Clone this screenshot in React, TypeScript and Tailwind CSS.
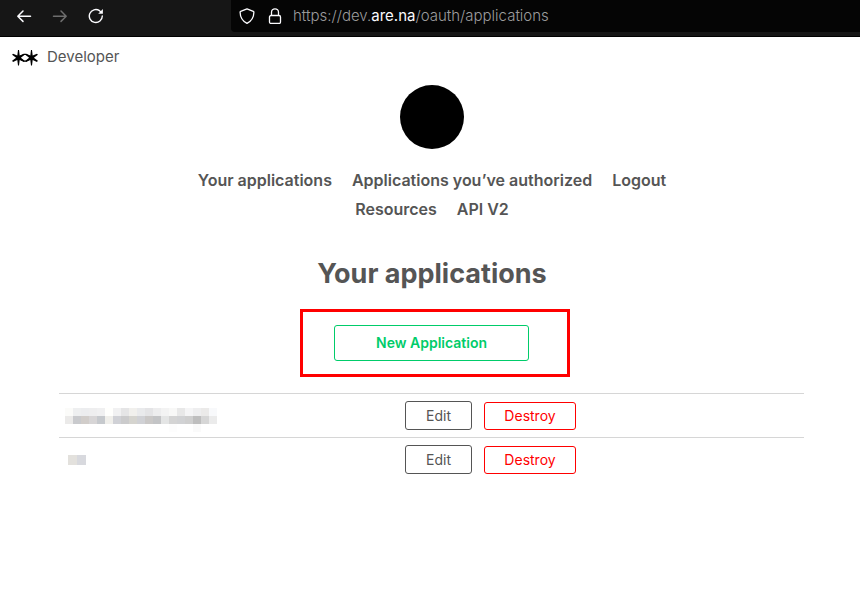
import React from "react";

const rowA = ["#fbfbf9", "#eeeff0", "#ecedef", "#eeeeef", "#f0f0f1", "#fffffd", "#f1f1f2", "#e5e5e6", "#f1f0ed", "#e9eaec", "#e4e4e6", "#ededee", "#f3f3f3", "#f8f8f7", "#e8e8e8", "#f5f5f6", "#eeeeef", "#ebeae9", "#f8f9fb"];
const rowB = ["#ebeae9", "#c9cacd", "#d1cdca", "#d7d5d6", "#c6c9cd", "#f0efeb", "#d0d1d6", "#cbcbcc", "#d5d4cf", "#d0d1d5", "#cac8c7", "#c3c4c6", "#e4e5e5", "#d4d4d4", "#d1d2d4", "#cfcfcf", "#bebebe", "#d6d6d6", "#ebebeb"];
const rowC = ["#fff", "#fff", "#fff", "#fff", "#fff", "#fff", "#fff", "#fff", "#fff", "#fff", "#fff", "#fff", "#fff", "#fdfdfd", "#fff", "#fff", "#fafafa", "#fff", "#fff"];

function Mosaic({ rows, cell }: { rows: string[][]; cell: string }) {
  return (
    <div aria-hidden="true">
      {rows.map((row, i) => (
        <div key={i} className="flex">
          {row.map((color, j) => (
            <span key={j} className={cell} style={{ backgroundColor: color }} />
          ))}
        </div>
      ))}
    </div>
  );
}

function BrowserBar() {
  return (
    <header className="flex h-[37px] items-start border-b border-black bg-[#161616]">
      <div className="flex h-8 w-[231px] shrink-0 items-center gap-4 pl-[14px]">
        <button aria-label="Back" className="flex size-5 items-center justify-center text-[#fbfbfe]">
          <svg className="size-4" viewBox="0 0 16 16" fill="none" stroke="currentColor" strokeWidth="1.5" strokeLinecap="round" strokeLinejoin="round">
            <path d="M14.500 8.200H1.800M7 3 1.800 8.200 7 13.400" />
          </svg>
        </button>
        <button aria-label="Forward" className="flex size-5 items-center justify-center text-[#6e6e6e]">
          <svg className="size-4" viewBox="0 0 16 16" fill="none" stroke="currentColor" strokeWidth="1.5" strokeLinecap="round" strokeLinejoin="round">
            <path d="M1.500 8.200h12.700M9 3l5.200 5.200L9 13.400" />
          </svg>
        </button>
        <button aria-label="Reload" className="flex size-5 items-center justify-center text-[#fbfbfe]">
          <svg className="size-4" viewBox="0 0 16 16" fill="none" stroke="currentColor" strokeWidth="1.4" strokeLinecap="round">
            <path d="M14.300 8A6.500 6.500 0 1 1 11.500 2.700l1.500 1.300" />
            <path d="M14.900 1v4.700h-4.700z" fill="currentColor" stroke="none" />
          </svg>
        </button>
      </div>
      <div className="flex h-8 min-w-0 grow items-center rounded-bl bg-[#050505] pl-2 text-[#fbfbfe]">
        <svg className="size-4 shrink-0" viewBox="0 0 16 16" fill="none" stroke="currentColor" strokeWidth="1.3" strokeLinejoin="round">
          <path d="M8 .800 14.300 3.300c.4.200.6.400.6.900C14.800 9.200 12.500 13 8 15.400 3.500 13 1.200 9.200 1.100 4.200c0-.5.2-.7.600-.9z" />
        </svg>
        <svg className="ml-3 size-4 shrink-0" viewBox="0 0 16 16" fill="none" stroke="currentColor" strokeWidth="1.3">
          <rect x="2.500" y="7.500" width="11" height="8" rx="1.500" />
          <path d="M4.500 7.500V4.300a3.500 3.500 0 0 1 7 0v3.200" />
        </svg>
        <span className="ml-[10px] text-[15px] leading-5 font-light text-[#9c9c9d]">
          https://dev.<span className="font-normal text-[#fbfbfe]">are.na</span>/oauth/applications
        </span>
      </div>
    </header>
  );
}

function Logo() {
  return (
    <svg className="h-[18px] w-7" viewBox="0 0 28 18" fill="none" stroke="#000" strokeLinejoin="round">
      <path strokeWidth="1.200" d="M9 8.500 13.200 6.300h1.600L19 8.500M9 11l4.200 2.200h1.600L19 11" />
      <g fill="#000" stroke="none">
        <path id="star" d="M7 2h1l.7 5.600L13 5.700l.6 1.100-3.700 3 3.700 3-.6 1.100-4.300-1.900L8 17.600H7L6.300 12 2 13.900l-.9-1.100 4-3-4-3L2 5.700l4.300 1.900z" />
        <path d="M20 2h1l.7 5.600L26 5.700l.9 1.100-4 3 4 3-.9 1.100-4.300-1.900-.7 5.600h-1l-.7-5.600-4.300 1.900-.6-1.100 3.700-3-3.700-3 .6-1.100 4.300 1.900z" />
      </g>
    </svg>
  );
}

const links = ["Your applications", "Applications you’ve authorized", "Logout", "Resources", "API V2"];

function AppRow({ name }: { name: React.ReactNode }) {
  return (
    <tr className="border-t border-[#d6d6d6]">
      <td className="w-[346px] py-[7px] pl-[6px]">{name}</td>
      <td className="w-[79px] py-[7px]">
        <button className="block h-[29px] w-[67px] rounded-[3px] border border-[#555] text-[14px] leading-5">Edit</button>
      </td>
      <td className="py-[7px]">
        <button className="block h-7 w-[92px] rounded-[3px] border border-[#f00] text-[14px] leading-5 text-[#f00]">Destroy</button>
      </td>
    </tr>
  );
}

export default function App() {
  return (
    <div className="bg-white font-['Inter','Liberation_Sans',sans-serif] text-[#555]">
      <BrowserBar />
      <div className="flex h-10 items-center pl-[11px]">
        <a href="#" className="flex items-center gap-2 text-[15px] leading-6">
          <Logo />
          Developer
        </a>
      </div>
      <main className="flex flex-col items-center pt-2 pl-1">
        <div className="size-16 rounded-full bg-black" />
        <nav className="mt-[17px] flex max-w-[500px] flex-wrap justify-center gap-x-5 text-[16px] leading-[29px] font-semibold">
          {links.map((label) => (
            <a key={label} href="#">{label}</a>
          ))}
        </nav>
        <h1 className="mt-[30px] text-[27px] leading-10 font-bold">Your applications</h1>
        <div className="mt-[15px] ml-[6px] border-3 border-[#f00] py-[13px] pr-[38px] pl-[31px]">
          <button className="block h-9 w-[195px] rounded-[3px] border border-[#00cc6a] text-[14px] leading-5 font-semibold text-[#00cc6a]">
            New Application
          </button>
        </div>
        <div className="mt-4 w-full pr-14 pl-[55px]">
          <table className="w-full table-fixed border-collapse text-left">
            <tbody>
              <AppRow name={<div className="h-4"><Mosaic rows={[rowA, rowB, rowC]} cell="size-2" /></div>} />
              <AppRow name={<div className="pl-[3px]"><Mosaic rows={[["#e3e1dd", "#d8d9de"]]} cell="h-[10px] w-[9px]" /></div>} />
            </tbody>
          </table>
        </div>
      </main>
    </div>
  );
}
